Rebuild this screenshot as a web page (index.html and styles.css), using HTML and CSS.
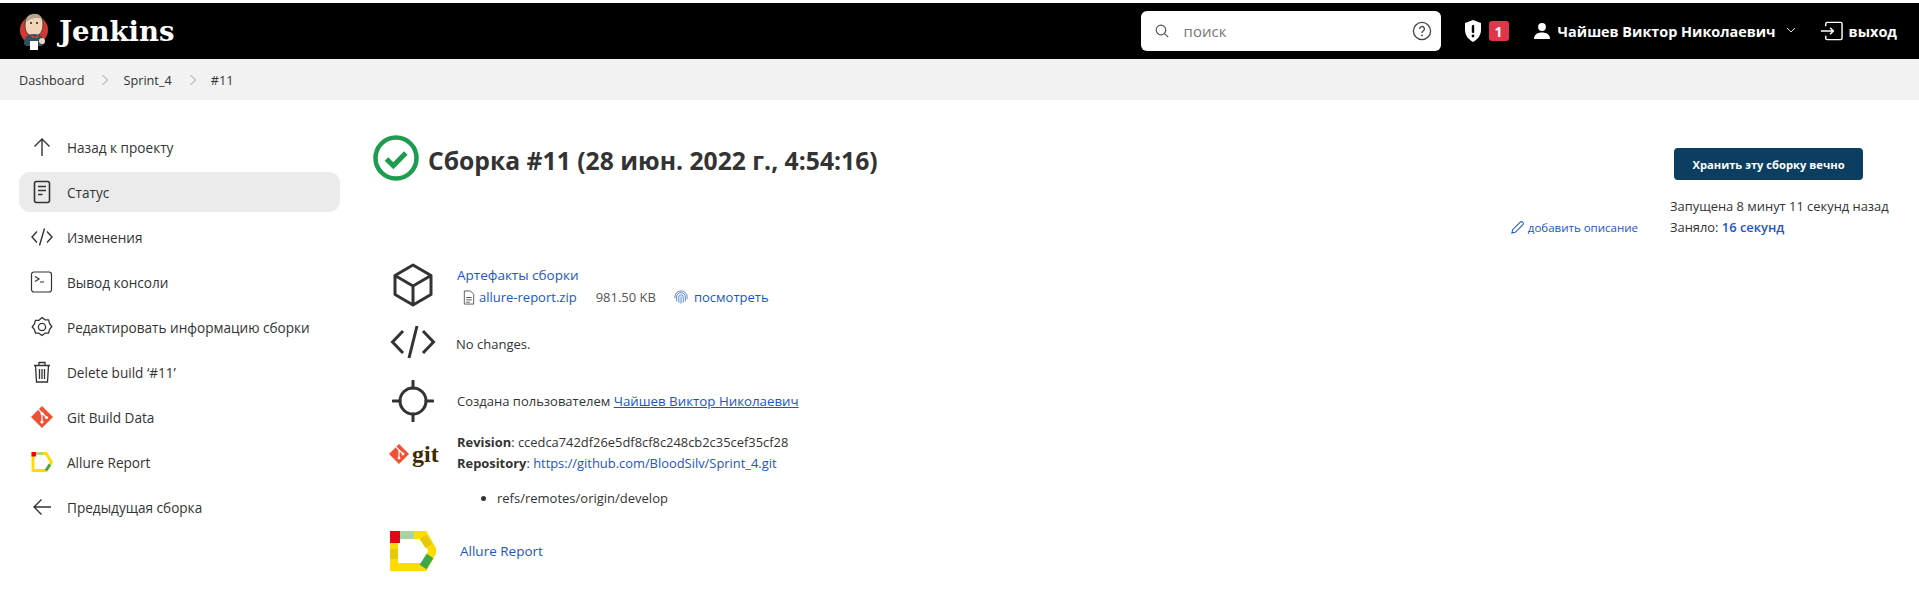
FILE: index.html
```html
<!DOCTYPE html>
<html lang="ru">
<head>
<meta charset="utf-8">
<title>Jenkins</title>
<link rel="stylesheet" href="styles.css">
</head>
<body>
<header class="topbar">
  <a class="brand">
    <svg class="logo" viewBox="0 0 30 40" width="30" height="40">
      <circle cx="15" cy="19" r="14" fill="#d33833"/>
      <path d="M6 14c0-8 4-11 9-11s9 3 9 10c0 6-2 12-9 12S6 20 6 14z" fill="#f0d6b7" stroke="#49403a" stroke-width="1"/>
      <path d="M7 11c1-5 5-8 9-8s6 2 7 5c-5-2-11-1-16 3z" fill="#b9a48e"/>
      <path d="M5 33c0-7 4-10 10-10s10 3 11 9l-3 3H7z" fill="#335061"/>
      <path d="M12 23l4 3 4-3-1 4h-6z" fill="#d33833"/>
      <path d="M11 30h8v9h-8z" fill="#fff"/>
      <circle cx="23" cy="30" r="3" fill="#f0d6b7"/>
      <circle cx="12" cy="12" r="1" fill="#222"/>
      <circle cx="18" cy="12" r="1" fill="#222"/>
    </svg>
    <span class="brand-name">Jenkins</span>
  </a>
  <div class="top-right">
    <div class="search">
      <svg class="search-ico" viewBox="0 0 16 16" width="16" height="16"><circle cx="7" cy="7" r="4.8" fill="none" stroke="#555" stroke-width="1.2"/><path d="M10.6 10.6l3.6 3.6" stroke="#555" stroke-width="1.2"/></svg>
      <span class="search-text">поиск</span>
      <svg class="help-ico" viewBox="0 0 20 20" width="20" height="20"><circle cx="10" cy="10" r="8.6" fill="none" stroke="#444" stroke-width="1.3"/><path d="M7.6 8a2.4 2.4 0 1 1 3.6 2c-.8.5-1.2 1-1.2 1.9" fill="none" stroke="#444" stroke-width="1.3"/><circle cx="10" cy="14.4" r=".9" fill="#444"/></svg>
    </div>
    <svg class="shield" viewBox="0 0 18 22" width="18" height="22"><path d="M9 0l8 3v7c0 5.500-3.500 9.500-8 12-4.500-2.500-8-6.500-8-12V3z" fill="#fff"/><rect x="7.800" y="5" width="2.400" height="8" rx="1" fill="#000"/><circle cx="9" cy="16" r="1.400" fill="#000"/></svg>
    <span class="badge">1</span>
    <svg class="user-ico" viewBox="0 0 18 18" width="18" height="18"><circle cx="9" cy="5" r="3.900" fill="#fff"/><path d="M1 17c0-4.500 3.500-6.500 8-6.500s8 2 8 6.500z" fill="#fff"/></svg>
    <span class="user-name">Чайшев Виктор Николаевич</span>
    <svg class="chev" viewBox="0 0 10 6" width="10" height="6"><path d="M1 1l4 4 4-4" fill="none" stroke="#ddd" stroke-width="1"/></svg>
    <svg class="logout" viewBox="0 0 24 20" width="23" height="20"><path d="M6 5V2.500A1.500 1.500 0 0 1 7.500 1h14A1.500 1.500 0 0 1 23 2.500v15a1.500 1.500 0 0 1-1.500 1.500h-14A1.500 1.500 0 0 1 6 17.500V15" fill="none" stroke="#fff" stroke-width="1.500"/><path d="M1 10h13M10.500 6.500L14 10l-3.500 3.500" fill="none" stroke="#fff" stroke-width="1.500"/></svg>
    <span class="logout-text">выход</span>
  </div>
</header>

<nav class="crumbs">
  <span>Dashboard</span>
  <svg class="crumb-sep" viewBox="0 0 8 12" width="8" height="12"><path d="M1.500 1l5 5-5 5" fill="none" stroke="#999" stroke-width="1"/></svg>
  <span>Sprint_4</span>
  <svg class="crumb-sep" viewBox="0 0 8 12" width="8" height="12"><path d="M1.500 1l5 5-5 5" fill="none" stroke="#999" stroke-width="1"/></svg>
  <span>#11</span>
</nav>

<div class="page">
  <aside class="side">
    <a class="side-item"><svg class="side-ico" viewBox="0 0 24 24"><path d="M12 21V4M4.500 11.500L12 4l7.500 7.500" fill="none" stroke="#333" stroke-width="1.400"/></svg>Назад к проекту</a>
    <a class="side-item active"><svg class="side-ico" viewBox="0 0 24 24"><rect x="4.500" y="1.500" width="15" height="21" rx="2" fill="none" stroke="#333" stroke-width="1.600"/><path d="M8 6.500h8M8 10.500h8M8 14.500h4.500" stroke="#333" stroke-width="1.600"/></svg>Статус</a>
    <a class="side-item"><svg class="side-ico" viewBox="0 0 24 24"><path d="M7 6.500L2 12l5 5.500M17 6.500l5 5.500-5 5.500M14.500 3.500l-5 17" fill="none" stroke="#333" stroke-width="1.400"/></svg>Изменения</a>
    <a class="side-item"><svg class="side-ico" viewBox="0 0 24 24"><rect x="1.500" y="2" width="20" height="20" rx="2.500" fill="none" stroke="#333" stroke-width="1.200"/><path d="M5 6.500L9 9l-4 2.500M10 12h4" fill="none" stroke="#333" stroke-width="1.200"/></svg>Вывод консоли</a>
    <a class="side-item"><svg class="side-ico" viewBox="0 0 24 24"><path d="M12 2.500l3 2.300 3.600.1.900 3.500 2.300 3.100-2.300 3.100-.9 3.500-3.600.1-3 2.300-3-2.300-3.600-.1-.9-3.500L2.200 12l2.300-3.100.9-3.500 3.600-.1z" fill="none" stroke="#333" stroke-width="1.300" stroke-linejoin="round"/><circle cx="12" cy="12" r="3.600" fill="none" stroke="#333" stroke-width="1.300"/></svg>Редактировать информацию сборки</a>
    <a class="side-item"><svg class="side-ico" viewBox="0 0 24 24"><path d="M4 5.500h16M9 5V2.500h6V5M5.500 5.500l1 16.500h11l1-16.500M9.500 9v10M12 9v10M14.500 9v10" fill="none" stroke="#333" stroke-width="1.300"/></svg>Delete build ‘#11’</a>
    <a class="side-item"><svg class="side-ico" viewBox="0 0 24 24"><path d="M12 1l11 11-11 11L1 12z" fill="#f05133"/><path d="M8.500 4.500l3.500 3.500v9M12 8l4.500 4.500" stroke="#fff" stroke-width="1.300" fill="none"/><circle cx="12" cy="8.500" r="1.600" fill="#fff"/><circle cx="12" cy="17" r="1.600" fill="#fff"/><circle cx="16.500" cy="12.500" r="1.600" fill="#fff"/></svg>Git Build Data</a>
    <a class="side-item"><svg class="side-ico" viewBox="0 0 24 24"><path d="M3 3.500h13l5.500 8.500-5.500 8.500H3z" fill="none" stroke="#ffdb00" stroke-width="2.800"/><path d="M1.500 2h4.500v4.500H1.500z" fill="#e30613"/><path d="M6 3.500h7" stroke="#a9d3a2" stroke-width="2.800"/><path d="M20 14.500l-4 6" stroke="#3aa845" stroke-width="2.800"/></svg>Allure Report</a>
    <a class="side-item"><svg class="side-ico" viewBox="0 0 24 24"><path d="M21 12H4M11.500 4.500L4 12l7.500 7.500" fill="none" stroke="#333" stroke-width="1.400"/></svg>Предыдущая сборка</a>
  </aside>

  <main class="main">
    <div class="head">
      <div class="title-wrap">
        <svg class="status" viewBox="0 0 46 46" width="46" height="46"><circle cx="23" cy="23" r="20.500" fill="none" stroke="#1c9c4e" stroke-width="4.500"/><path d="M13.500 24l6.800 6.800 12.500-12.800" fill="none" stroke="#1c9c4e" stroke-width="5"/></svg>
        <h1 class="title">Сборка #11 (28 июн. 2022 г., 4:54:16)</h1>
      </div>
      <div class="desc-col">
        <a class="add-desc"><svg viewBox="0 0 16 16" width="15" height="15"><path d="M2 14l.8-3.600L11 2.200a1.600 1.600 0 0 1 2.300 0l.5.500a1.600 1.600 0 0 1 0 2.300L5.600 13.200z" fill="none" stroke="#1a56c4" stroke-width="1.100"/></svg>добавить описание</a>
      </div>
      <div class="meta">
        <button class="keep">Хранить эту сборку вечно</button>
        <div class="meta-line">Запущена 8 минут 11 секунд назад</div>
        <div class="meta-line">Заняло: <a class="link-b">16 секунд</a></div>
      </div>
    </div>

    <div class="build-row row-art">
      <svg class="b-ico" viewBox="0 0 42 44" width="42" height="44"><path d="M21 2l18 10.500v19L21 42 3 31.500v-19zM3 12.500L21 23l18-10.500M21 23v19" fill="none" stroke="#333" stroke-width="3" stroke-linejoin="round"/></svg>
      <div class="b-body">
        <a class="link line-art">Артефакты сборки</a>
        <div class="art-file">
          <svg viewBox="0 0 12 16" width="12" height="15"><path d="M1 1h6.500L11 4.500V15H1z M3 8h6M3 10.500h6M3 13h4" fill="none" stroke="#555" stroke-width="1"/></svg>
          <a class="link-m">allure-report.zip</a>
          <span class="size">981.50 KB</span>
          <svg class="finger" viewBox="0 0 16 16" width="14" height="16"><path d="M3 13V8a5 5 0 0 1 10 0v5M5.500 14.500V8a2.500 2.500 0 0 1 5 0v6.500M8 7.500v8M1 9.500V8a7 7 0 0 1 14 0v2.500" fill="none" stroke="#1a56c4" stroke-width=".8"/></svg>
          <a class="link-m">посмотреть</a>
        </div>
      </div>
    </div>

    <div class="build-row row-code">
      <svg class="b-ico wide" viewBox="0 0 46 36" width="46" height="36"><path d="M13 7L2.500 18 13 29M33 7l10.500 11L33 29M27 2l-8 32" fill="none" stroke="#333" stroke-width="3"/></svg>
      <div class="b-body">No changes.</div>
    </div>

    <div class="build-row row-user">
      <svg class="b-ico" viewBox="0 0 42 42" width="42" height="42"><circle cx="21" cy="21" r="13" fill="none" stroke="#333" stroke-width="3"/><path d="M21 1v7M21 34v7M1 21h7M34 21h7" stroke="#333" stroke-width="3" stroke-linecap="round"/></svg>
      <div class="b-body">Создана пользователем <a class="link-u">Чайшев Виктор Николаевич</a></div>
    </div>

    <div class="build-row row-git">
      <div class="git-logo">
        <svg class="git-mark" viewBox="0 0 20 20" width="20" height="20"><path d="M10 0l10 10-10 10L0 10z" fill="#f05133"/><path d="M7 3l3 3v8M10 6l4 4" stroke="#fff" stroke-width="1.200" fill="none"/><circle cx="10" cy="14" r="1.400" fill="#fff"/><circle cx="14" cy="10" r="1.400" fill="#fff"/></svg>
        <span class="git-word">git</span>
      </div>
      <div class="b-body">
        <div class="git-line"><b class="strong">Revision</b>: ccedca742df26e5df8cf8c248cb2c35cef35cf28</div>
        <div class="git-line"><b class="strong">Repository</b>: <a class="link-m">https://github.com/BloodSilv/Sprint_4.git</a></div>
        <ul class="refs"><li>refs/remotes/origin/develop</li></ul>
      </div>
    </div>

    <div class="build-row row-allure">
      <svg class="b-ico" viewBox="0 0 46 40" width="46" height="40"><path d="M4 4h30l9 16-9 16H4z" fill="none" stroke="#ffdb00" stroke-width="8"/><path d="M0 0h10v12H0z" fill="#e30613"/><path d="M10 4h14" stroke="#a9d3a2" stroke-width="8"/><path d="M4 18v10" stroke="#e6c90a" stroke-width="8"/><path d="M33 6l6 9" stroke="#e6c90a" stroke-width="8"/><path d="M40 25l-7 11" stroke="#3aa845" stroke-width="8"/></svg>
      <a class="link allure-link">Allure Report</a>
    </div>
  </main>
</div>
</body>
</html>
```
FILE: styles.css
```css
* { box-sizing: border-box; }
html, body { margin: 0; padding: 0; }
body {
  font-family: "Open Sans", "Noto Sans", sans-serif;
  font-size: 13px;
  color: #333;
  background: #fff;
  height: 591px;
  overflow: hidden;
  padding-top: 3px;
}
.topbar {
  height: 56px;
  background: #000;
  display: flex;
  align-items: center;
  justify-content: space-between;
  padding: 0 22px 0 19px;
  color: #fff;
}
.brand { display: flex; align-items: center; }
.logo { display: block; }
.brand-name {
  font-family: "DejaVu Serif", "Liberation Serif", serif;
  font-weight: 700;
  font-size: 27.500px;
  margin-left: 10px;
}
.top-right { display: flex; align-items: center; }
.search {
  width: 300px;
  height: 40px;
  background: #fff;
  border-radius: 6px;
  display: flex;
  align-items: center;
  padding: 0 9px 0 13px;
  margin-right: 23px;
}
.search-text { color: #777; font-size: 15px; margin-left: 14px; flex: 1; }
.shield { margin-right: 7px; flex: none; }
.badge {
  background: #e0354b;
  color: #fff;
  font-weight: 700;
  font-size: 14px;
  width: 20px;
  height: 20px;
  border-radius: 3px;
  display: flex;
  align-items: center;
  justify-content: center;
  margin-right: 24px;
}
.user-ico { margin-right: 7px; flex: none; }
.user-name { font-weight: 700; font-size: 14.400px; }
.chev { margin: 0 24px 2px 10px; flex: none; }
.logout { margin-right: 6px; flex: none; }
.logout-text { font-weight: 700; font-size: 14.500px; }
.crumbs {
  height: 41px;
  background: #f2f2f2;
  display: flex;
  align-items: center;
  padding-left: 19px;
  font-size: 12.700px;
  color: #333;
}
.crumb-sep { margin: 0 14px 0 17px; }
.page { display: flex; padding-top: 27px; }
.side { width: 321px; margin-left: 19px; flex: none; }
.side-item {
  height: 40px;
  margin-bottom: 5px;
  padding-left: 11px;
  display: flex;
  align-items: center;
  font-size: 13.600px;
  color: #333;
  border-radius: 11px;
}
.side-item.active { background: #ebebeb; }
.side-ico { width: 24px; height: 24px; margin-right: 13px; flex: none; }
.main { flex: 1; padding: 8px 56px 0 33px; }
.head { display: flex; height: 129px; align-items: flex-start; }
.title-wrap { display: flex; align-items: center; flex: 1; }
.status { flex: none; margin-right: 9px; }
.title { margin: 4px 0 0; font-size: 24.700px; font-weight: 700; color: #333; }
.desc-col { display: flex; align-items: flex-end; height: 100px; margin-right: 32px; }
.add-desc {
  display: flex;
  align-items: center;
  gap: 3px;
  font-size: 11.500px;
  color: #1a56c4;
}
.meta { width: 193px; padding-top: 13px; font-size: 12.900px; }
.keep {
  width: 189px;
  height: 32px;
  margin: 0 0 16px 4px;
  background: #0b3e61;
  color: #fff;
  border: 0;
  border-radius: 4px;
  font: 700 11.200px "Open Sans", "Noto Sans", sans-serif;
  display: block;
}
.meta-line { line-height: 21px; white-space: nowrap; }
.link-b { color: #1a56c4; font-weight: 600; }
.build-row { display: flex; padding-left: 19px; }
.b-ico { flex: none; display: block; }
.b-body { margin-left: 23px; font-size: 13px; }
.row-art { height: 48px; }
.row-art .b-ico { margin-top: -1px; }
.link { color: #1a56c4; font-size: 13.500px; }
.link-m { color: #1a56c4; font-weight: 500; }
.line-art { display: block; line-height: 22px; }
.art-file { display: flex; align-items: center; margin: 1px 0 0 6px; line-height: 20px; font-size: 13px; }
.art-file svg { margin-right: 4px; }
.size { color: #555; margin: 0 18px 0 19px; }
.finger { margin-right: 6px !important; }
.row-code { height: 60px; align-items: center; padding-left: 17px; }
.row-code .b-body { margin: 4px 0 0 20px; }
.row-user { height: 58px; align-items: center; }
.row-user .b-body { margin-left: 23px; }
.link-u { color: #1a56c4; text-decoration: underline; font-size: 13.300px; font-weight: 500; }
.row-git { height: 101px; padding-left: 16px; padding-top: 2px; }
.git-logo { display: flex; align-items: center; width: 50px; height: 44px; flex: none; }
.git-mark { flex: none; }
.git-word { font-family: "Liberation Serif", serif; font-weight: 700; font-size: 24px; color: #3e2c00; margin-left: 3px; line-height: 1; }
.row-git .b-body { margin-left: 18px; }
.git-line { line-height: 21px; font-size: 12.900px; }
.strong { font-weight: 700; }
.refs { margin: 15px 0 0; padding-left: 40px; font-size: 13px; }
.row-allure { align-items: center; padding-left: 17px; }
.allure-link { margin-left: 24px; }
```
